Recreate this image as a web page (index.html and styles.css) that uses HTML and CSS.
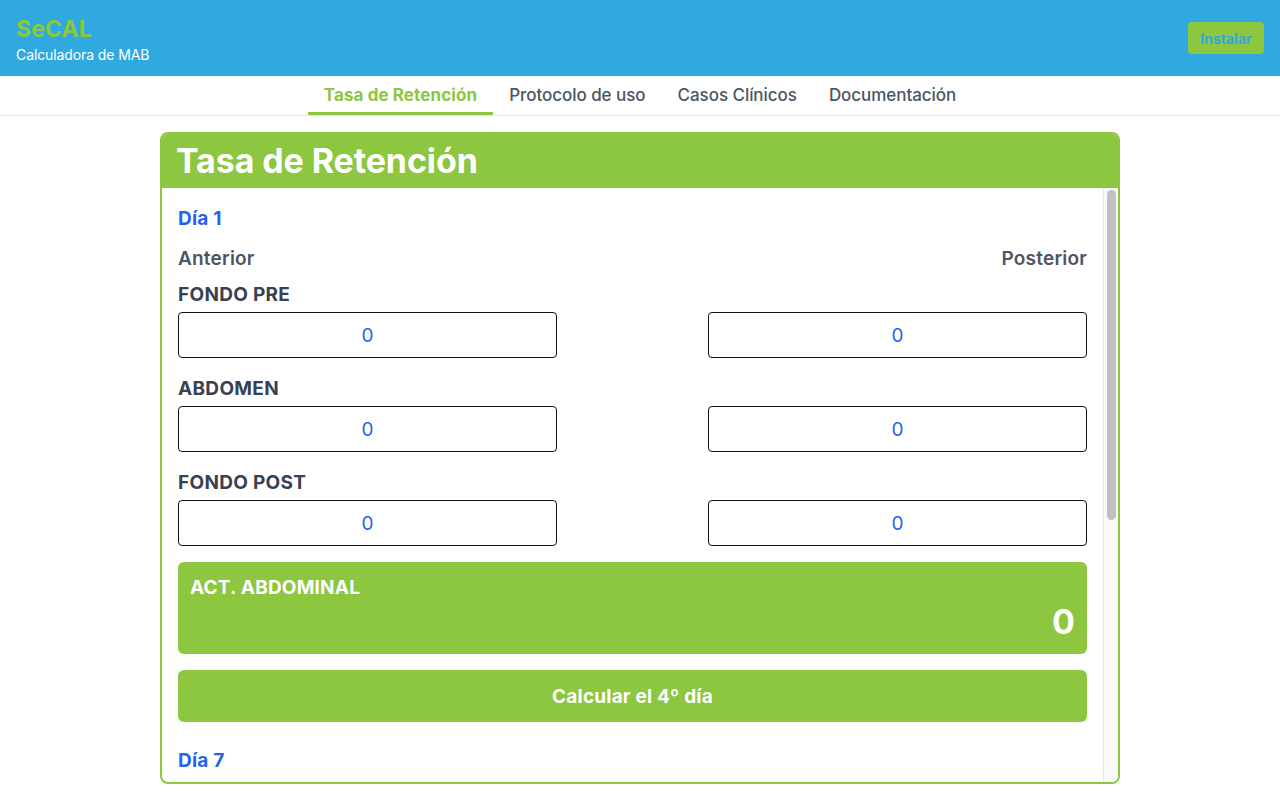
FILE: index.html
```html
<!DOCTYPE html>
<html lang="es">
<head>
<meta charset="utf-8">
<title>SeCAL - Calculadora de MAB</title>
<link rel="stylesheet" href="styles.css">
</head>
<body>
<div class="app">
  <header class="topbar">
    <div class="brand">
      <div class="brand-title">SeCAL</div>
      <div class="brand-sub">Calculadora de MAB</div>
    </div>
    <button class="install">Instalar</button>
  </header>
  <nav class="tabs">
    <a class="tab active">Tasa de Retención</a>
    <a class="tab">Protocolo de uso</a>
    <a class="tab">Casos Clínicos</a>
    <a class="tab">Documentación</a>
  </nav>
  <main class="main">
    <section class="card">
      <h1 class="card-title">Tasa de Retención</h1>
      <div class="card-body">
        <div class="scroll-content">
          <div class="day">
            <h2 class="day-title">Día 1</h2>
            <div class="sides"><span>Anterior</span><span>Posterior</span></div>
            <div class="field">
              <div class="field-label">FONDO PRE</div>
              <div class="inputs"><input class="num" value="0"><input class="num" value="0"></div>
            </div>
            <div class="field">
              <div class="field-label">ABDOMEN</div>
              <div class="inputs"><input class="num" value="0"><input class="num" value="0"></div>
            </div>
            <div class="field">
              <div class="field-label">FONDO POST</div>
              <div class="inputs"><input class="num" value="0"><input class="num" value="0"></div>
            </div>
            <div class="result">
              <div class="result-label">ACT. ABDOMINAL</div>
              <div class="result-value">0</div>
            </div>
            <button class="calc">Calcular el 4º día</button>
          </div>
          <div class="day">
            <h2 class="day-title">Día 7</h2>
          </div>
        </div>
        <div class="scrollbar" aria-hidden="true"><div class="thumb"></div></div>
      </div>
    </section>
  </main>
</div>
</body>
</html>
```
FILE: styles.css
```css
* { box-sizing: border-box; }
html, body { margin: 0; padding: 0; height: 100%; }
body {
  font-family: Inter, "Noto Sans", "Liberation Sans", sans-serif;
  background: #ffffff;
  color: #374151;
  overflow: hidden;
}
.app { height: 100vh; display: flex; flex-direction: column; }

.topbar {
  height: 76px;
  flex: none;
  background: #2fa9e0;
  display: flex;
  align-items: center;
  justify-content: space-between;
  padding: 0 16px;
}
.brand { display: flex; flex-direction: column; margin-top: 4px; }
.brand-title { color: #8dc63f; font-weight: 700; font-size: 23px; line-height: 28px; letter-spacing: 0.1px; }
.brand-sub { color: #ffffff; font-size: 14px; line-height: 20px; margin-top: 2px; letter-spacing: -0.1px; }
.install {
  background: #8dc63f;
  color: #2fa9e0;
  border: none;
  border-radius: 4px;
  font-family: inherit;
  font-weight: 700;
  font-size: 14px;
  width: 76px;
  height: 32px;
  padding: 0;
}

.tabs {
  flex: none;
  height: 40px;
  display: flex;
  justify-content: center;
  border-bottom: 1px solid #e5e7eb;
}
.tab {
  padding: 0 16px;
  font-size: 17px;
  font-weight: 500;
  line-height: 38px;
  color: #4b5563;
  border-bottom: 3px solid transparent;
  letter-spacing: -0.05px;
}
.tab.active { color: #8dc63f; border-bottom-color: #8dc63f; font-weight: 700; letter-spacing: 0.1px; }

.main {
  flex: 1;
  min-height: 0;
  padding: 16px 0 16px;
  display: flex;
  justify-content: center;
}
.card {
  width: 960px;
  border: 2px solid #8dc63f;
  border-radius: 8px;
  display: flex;
  flex-direction: column;
  overflow: hidden;
}
.card-title {
  margin: 0;
  background: #8dc63f;
  color: #ffffff;
  font-size: 34px;
  font-weight: 700;
  line-height: 54px;
  height: 54px;
  padding: 0 14px;
  flex: none;
  letter-spacing: -0.1px;
}
.card-body {
  flex: 1;
  min-height: 0;
  display: flex;
  overflow: hidden;
}
.scroll-content {
  flex: 1;
  min-width: 0;
  overflow: hidden;
  padding: 19px 16px 0;
}
.scrollbar {
  flex: none;
  width: 15px;
  background: #fafafa;
  border-left: 1px solid #e8e8e8;
  padding: 2px 2px 0 3px;
}
.thumb {
  height: 330px;
  background: #c1c1c1;
  border-radius: 5px;
}

.day { margin-bottom: 27px; }
.day-title {
  margin: 0;
  color: #2563eb;
  font-size: 19px;
  font-weight: 700;
  line-height: 24px;
  letter-spacing: 0.2px;
}
.sides {
  display: flex;
  justify-content: space-between;
  margin-top: 16px;
  font-size: 19px;
  font-weight: 600;
  line-height: 24px;
  color: #4b5563;
  letter-spacing: 0.2px;
}
.field { margin-top: 11px; }
.field + .field { margin-top: 18px; }
.field-label {
  font-size: 19px;
  font-weight: 700;
  line-height: 26px;
  color: #374151;
  margin-bottom: 4px;
  letter-spacing: 0.3px;
}
.inputs { display: flex; justify-content: space-between; }
.num {
  width: 379px;
  height: 46px;
  border: 1px solid #111111;
  border-radius: 4px;
  text-align: center;
  font-family: inherit;
  font-size: 19px;
  color: #2563eb;
  background: #ffffff;
  padding: 0;
}
.result {
  margin-top: 16px;
  background: #8dc63f;
  border-radius: 6px;
  padding: 12px;
  color: #ffffff;
  display: flex;
  flex-direction: column;
}
.result-label { font-size: 19px; font-weight: 700; line-height: 28px; letter-spacing: 0.2px; }
.result-value { align-self: flex-end; font-size: 34px; font-weight: 700; line-height: 40px; }
.calc {
  display: block;
  width: 100%;
  margin-top: 16px;
  height: 52px;
  border: none;
  border-radius: 6px;
  background: #8dc63f;
  color: #ffffff;
  font-family: inherit;
  font-size: 19px;
  font-weight: 700;
  letter-spacing: 0.2px;
}
```
